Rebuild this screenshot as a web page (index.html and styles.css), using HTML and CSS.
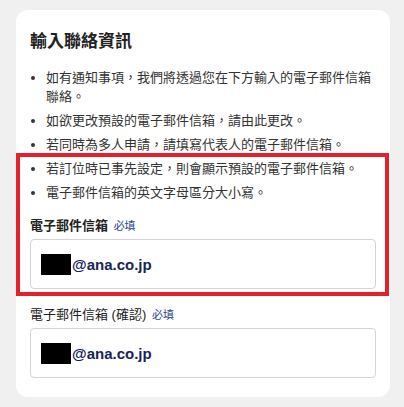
FILE: index.html
```html
<!DOCTYPE html>
<html lang="zh-Hant">
<head>
<meta charset="utf-8">
<link rel="stylesheet" href="styles.css">
</head>
<body>
<div class="page">
  <section class="card">
    <h2 class="title">輸入聯絡資訊</h2>
    <ul class="notes">
      <li>如有通知事項，我們將透過您在下方輸入的電子郵件信箱聯絡。</li>
      <li>如欲更改預設的電子郵件信箱，請由此更改。</li>
      <li>若同時為多人申請，請填寫代表人的電子郵件信箱。</li>
      <li>若訂位時已事先設定，則會顯示預設的電子郵件信箱。</li>
      <li>電子郵件信箱的英文字母區分大小寫。</li>
    </ul>
    <div class="field">
      <div class="label bold">電子郵件信箱 <span class="req">必填</span></div>
      <div class="input"><span class="mask"></span><span class="value">@ana.co.jp</span></div>
    </div>
    <div class="field second">
      <div class="label">電子郵件信箱 (確認) <span class="req">必填</span></div>
      <div class="input"><span class="mask"></span><span class="value">@ana.co.jp</span></div>
    </div>
    <div class="highlight"></div>
  </section>
</div>
</body>
</html>
```

FILE: styles.css
```css
html, body {
  margin: 0;
  padding: 0;
  background: #f0f0f0;
}
body {
  font-family: "Liberation Sans", "Noto Sans CJK TC", sans-serif;
  color: #222;
}
.page {
  padding: 10px 14px 9px 16px;
}
.card {
  position: relative;
  width: 374px;
  box-sizing: border-box;
  background: #fff;
  border-radius: 12px;
  padding: 20px 14px 19px 14px;
}
.title {
  margin: 0;
  font-size: 17px;
  line-height: 24px;
  font-weight: 700;
  color: #222;
}
.notes {
  list-style: none;
  margin: 14px 0 0 0;
  padding: 0;
}
.notes li {
  position: relative;
  padding-left: 16px;
  font-size: 13px;
  line-height: 19px;
  color: #333;
  margin-bottom: 5px;
}
.notes li:last-child {
  margin-bottom: 0;
}
.notes li::before {
  content: "";
  position: absolute;
  left: 1px;
  top: 8px;
  width: 4px;
  height: 4px;
  border-radius: 50%;
  background: #333;
}
.field {
  margin-top: 14px;
}
.field.second {
  margin-top: 16px;
}
.label {
  font-size: 13px;
  line-height: 20px;
  color: #222;
}
.label.bold {
  font-weight: 700;
}
.req {
  font-size: 11px;
  font-weight: 400;
  color: #1f3f8f;
  margin-left: 2px;
}
.input {
  margin-top: 3px;
  height: 50px;
  box-sizing: border-box;
  border: 1px solid #d4d4d4;
  border-radius: 4px;
  display: flex;
  align-items: center;
  padding-left: 10px;
}
.mask {
  display: inline-block;
  width: 30px;
  height: 21px;
  background: #000;
}
.value {
  font-size: 15px;
  font-weight: 700;
  color: #17245a;
  margin-left: 1px;
}
.highlight {
  position: absolute;
  left: 0;
  top: 143px;
  width: 373px;
  height: 143px;
  box-sizing: border-box;
  border: 4px solid #e3202b;
  pointer-events: none;
}
```
